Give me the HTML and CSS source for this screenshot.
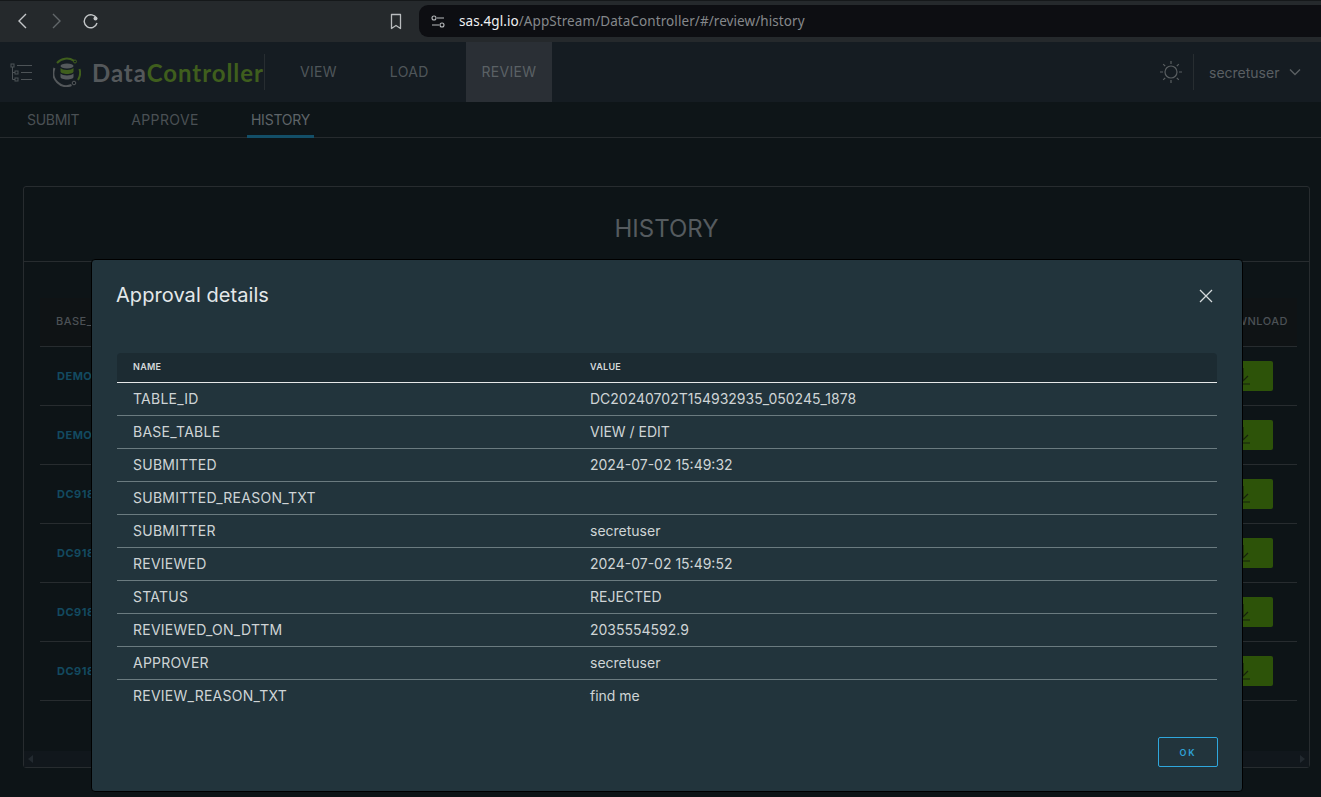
FILE: index.html
```html
<!DOCTYPE html>
<html lang="en">
<head>
<meta charset="utf-8">
<title>Data Controller - History</title>
<link rel="stylesheet" href="styles.css">
</head>
<body>
<div class="browser">
  <div class="browser-nav">
    <svg class="b-icon" width="12" height="18" viewBox="0 0 12 18"><path d="M9 2 2 9l7 7" fill="none" stroke="#c4c7c9" stroke-width="1.4"/></svg>
    <svg class="b-icon" width="12" height="18" viewBox="0 0 12 18"><path d="M3 2l7 7-7 7" fill="none" stroke="#62676a" stroke-width="1.4"/></svg>
    <svg class="b-icon" width="16" height="16" viewBox="0 0 16 16"><path d="M13.6 5.5A6.5 6.5 0 1 0 14 10" fill="none" stroke="#c4c7c9" stroke-width="1.4"/><circle cx="12.5" cy="5.5" r="2" fill="#c4c7c9"/></svg>
  </div>
  <svg class="bookmark" width="12" height="17" viewBox="0 0 12 17"><path d="M1.5 1.5h9v14L6 12.5l-4.500 3z" fill="none" stroke="#b9bcbe" stroke-width="1.3" stroke-linejoin="round"/></svg>
  <div class="address">
    <svg width="14" height="13" viewBox="0 0 14 13"><g fill="none" stroke="#b9bcbe" stroke-width="1.1"><circle cx="3" cy="3" r="2"/><path d="M6 3h7M1 10h7"/><circle cx="11" cy="10" r="2"/></g></svg>
    <span class="url"><b class="host">sas.4gl.io</b>/AppStream/DataController/#/review/history</span>
  </div>
</div>

<header class="app-header">
  <svg class="tree" width="22" height="19" viewBox="0 0 22 19"><g fill="none" stroke="#4d5357" stroke-width="1"><rect x="1" y="1" width="3" height="3"/><rect x="5" y="8" width="3" height="3"/><rect x="5" y="15" width="3" height="3"/><path d="M2.500 4v12.500H5M2.500 9.500H5M7 2.500h15M11 9.500h11M11 16.500h11" /></g></svg>
  <svg class="logo" width="28" height="30" viewBox="0 0 28 30">
    <path d="M21 3.800A13 13 0 0 0 4 6" fill="none" stroke="#3f5e1d" stroke-width="2"/>
    <circle cx="22" cy="4.500" r="1.500" fill="none" stroke="#3f5e1d"/>
    <path d="M26.500 12a13 13 0 0 1-1.500 11" fill="none" stroke="#3f5e1d" stroke-width="2"/>
    <path d="M1.500 11a13 13 0 0 0 17 17" fill="none" stroke="#54585b" stroke-width="2"/>
    <circle cx="21" cy="26" r="1.800" fill="none" stroke="#54585b"/>
    <ellipse cx="14" cy="9" rx="6.500" ry="2.500" fill="#54585b"/>
    <path d="M7.500 11v3.500c0 1.500 3 2.500 6.500 2.500s6.500-1 6.500-2.500V11c-1 1.300-3.500 2-6.500 2s-5.500-.7-6.500-2z" fill="#3f5e1d"/>
    <path d="M7.500 16.500V20c0 1.500 3 2.500 6.500 2.500s6.500-1 6.500-2.500v-3.500c-1 1.300-3.500 2-6.500 2s-5.500-.7-6.500-2z" fill="#54585b"/>
  </svg>
  <span class="brand"><span class="brand-a">Data</span><span class="brand-b">Controller</span></span>
  <span class="divider brand-divider"></span>
  <nav class="main-nav">
    <a class="nav-item">VIEW</a>
    <a class="nav-item">LOAD</a>
    <a class="nav-item nav-active">REVIEW</a>
  </nav>
  <svg class="sun" width="24" height="24" viewBox="0 0 24 24"><g fill="none" stroke="#5a5f62" stroke-width="1.200"><circle cx="12" cy="12" r="6"/><path d="M12 1v3M12 20v3M1 12h3M20 12h3M4.200 4.200l2 2M17.800 17.800l2 2M4.200 19.800l2-2M17.800 6.200l2-2"/></g></svg>
  <span class="divider user-divider"></span>
  <span class="user">secretuser</span>
  <svg class="chev" width="12" height="8" viewBox="0 0 12 8"><path d="M1 1.500l5 5 5-5" fill="none" stroke="#5a5f62" stroke-width="1.400"/></svg>
</header>

<nav class="sub-nav">
  <a class="sub-item sub-submit">SUBMIT</a>
  <a class="sub-item sub-approve">APPROVE</a>
  <a class="sub-item sub-active">HISTORY</a>
</nav>

<main class="content">
  <section class="card">
    <h1 class="card-title">HISTORY</h1>
    <div class="card-body">
      <div class="hist-head"><span>BASE_TABLE</span><span>DOWNLOAD</span></div>
      <div class="hist-row"><a>DEMO</a><span class="dl"><svg width="16" height="18" viewBox="0 0 16 18"><path d="M8 1v13M3 9l5 5 5-5M1 17h14" fill="none" stroke="#17230c" stroke-width="1.200"/></svg></span></div>
      <div class="hist-row"><a>DEMO</a><span class="dl"><svg width="16" height="18" viewBox="0 0 16 18"><path d="M8 1v13M3 9l5 5 5-5M1 17h14" fill="none" stroke="#17230c" stroke-width="1.200"/></svg></span></div>
      <div class="hist-row"><a>DC918</a><span class="dl"><svg width="16" height="18" viewBox="0 0 16 18"><path d="M8 1v13M3 9l5 5 5-5M1 17h14" fill="none" stroke="#17230c" stroke-width="1.200"/></svg></span></div>
      <div class="hist-row"><a>DC918</a><span class="dl"><svg width="16" height="18" viewBox="0 0 16 18"><path d="M8 1v13M3 9l5 5 5-5M1 17h14" fill="none" stroke="#17230c" stroke-width="1.200"/></svg></span></div>
      <div class="hist-row"><a>DC918</a><span class="dl"><svg width="16" height="18" viewBox="0 0 16 18"><path d="M8 1v13M3 9l5 5 5-5M1 17h14" fill="none" stroke="#17230c" stroke-width="1.200"/></svg></span></div>
      <div class="hist-row"><a>DC918</a><span class="dl"><svg width="16" height="18" viewBox="0 0 16 18"><path d="M8 1v13M3 9l5 5 5-5M1 17h14" fill="none" stroke="#17230c" stroke-width="1.200"/></svg></span></div>
    </div>
    <div class="scrollbar"><i class="arrow-l"></i><i class="arrow-r"></i></div>
  </section>
</main>

<div class="modal" role="dialog">
  <div class="modal-head">
    <h2 class="modal-title">Approval details</h2>
    <svg class="close" width="14" height="14" viewBox="0 0 14 14"><path d="M1 1l12 12M13 1L1 13" fill="none" stroke="#d5dadc" stroke-width="1.300"/></svg>
  </div>
  <table class="details">
    <thead><tr><th>NAME</th><th>VALUE</th></tr></thead>
    <tbody>
      <tr><td>TABLE_ID</td><td>DC20240702T154932935_050245_1878</td></tr>
      <tr><td>BASE_TABLE</td><td>VIEW / EDIT</td></tr>
      <tr><td>SUBMITTED</td><td>2024-07-02 15:49:32</td></tr>
      <tr><td>SUBMITTED_REASON_TXT</td><td></td></tr>
      <tr><td>SUBMITTER</td><td>secretuser</td></tr>
      <tr><td>REVIEWED</td><td>2024-07-02 15:49:52</td></tr>
      <tr><td>STATUS</td><td>REJECTED</td></tr>
      <tr><td>REVIEWED_ON_DTTM</td><td>2035554592.9</td></tr>
      <tr><td>APPROVER</td><td>secretuser</td></tr>
      <tr><td>REVIEW_REASON_TXT</td><td>find me</td></tr>
    </tbody>
  </table>
  <div class="modal-foot"><button class="ok">OK</button></div>
</div>
</body>
</html>
```

FILE: styles.css
```css
* { box-sizing: border-box; }
html, body { margin: 0; height: 100%; }
body {
  position: relative;
  height: 797px;
  overflow: hidden;
  background: #0d1417;
  font-family: Inter, "Liberation Sans", sans-serif;
  color: #c8cdd0;
}

/* Browser chrome */
.browser {
  height: 42px;
  display: flex;
  align-items: center;
  background: #25292c;
  border-top: 1px solid #15181a;
  padding: 0 0 1px 17px;
}
.browser-nav { display: flex; align-items: center; gap: 21px; width: 365px; }
.b-icon { flex: none; }
.bookmark { flex: none; margin-right: 17px; margin-left: 8px; }
.address {
  flex: 1;
  height: 32px;
  display: flex;
  align-items: center;
  gap: 14px;
  padding-left: 12px;
  background: #0d0e12;
  border-radius: 9px 0 0 9px;
}
.url {
  font: 13.5px "Noto Sans", sans-serif;
  color: #85888b;
  letter-spacing: 0.08px;
}
.host { font-weight: 400; color: #f0f1f2; }

/* App header */
.app-header {
  height: 60px;
  display: flex;
  align-items: center;
  background: #151c22;
}
.tree { flex: none; margin-left: 10px; }
.logo { flex: none; margin-left: 21px; margin-right: 11px; }
.brand { font: 700 24px Lato, sans-serif; letter-spacing: 0.95px; width: 172px; white-space: nowrap; }
.brand-a { color: #54585b; }
.brand-b { color: #3f5e1d; }
.divider { flex: none; width: 1px; height: 36px; background: #272d31; }
.brand-divider { margin-left: 0; margin-right: 19px; }
.main-nav { display: flex; align-self: stretch; gap: 21px; flex: 1; }
.nav-item {
  display: flex;
  align-items: center;
  padding: 0 16px 1px;
  font-size: 14px;
  letter-spacing: 0.3px;
  color: #4f565a;
}
.nav-active { background: #2a2f35; color: #5b6165; }
.sun { flex: none; margin-right: 10px; }
.user { font-size: 14px; color: #5a5f62; margin: 0 10px 0 15px; width: 70px; }
.chev { flex: none; margin-right: 20px; margin-left: 0; }

/* Sub navigation */
.sub-nav {
  height: 36px;
  display: flex;
  gap: 44px;
  padding-left: 23px;
  background: #0e1518;
  border-bottom: 1px solid #262b2e;
}
.sub-item {
  display: flex;
  align-items: center;
  height: 36px;
  padding: 0 4px 1px;
  font-size: 14px;
  color: #4a5054;
}
.sub-submit { letter-spacing: -0.3px; }
.sub-approve { letter-spacing: 0.4px; }
.sub-active { color: #5e6468; border-bottom: 3px solid #134f68; padding-top: 2px; letter-spacing: -0.2px; }

/* Page content */
.content { padding: 48px 11px 0 23px; }
.card {
  height: 582px;
  display: flex;
  flex-direction: column;
  border: 1px solid #272c2f;
  border-radius: 3px;
  background: #0d1417;
}
.card-title {
  height: 75px;
  margin: 0;
  padding-top: 8px;
  display: flex;
  align-items: center;
  justify-content: center;
  border-bottom: 1px solid #272c2f;
  font-size: 24px;
  font-weight: 400;
  color: #555b5f;
}
.card-body { flex: 1; padding: 36px 12px 0 16px; }
.hist-head {
  height: 49px;
  display: flex;
  align-items: center;
  justify-content: space-between;
  padding: 0 9px 2px 16px;
  background: #0f1315;
  border-bottom: 1px solid #272c2f;
  font-size: 11px;
  font-weight: 500;
  letter-spacing: 0.5px;
  color: #4c5155;
}
.hist-row {
  height: 59px;
  display: flex;
  align-items: center;
  justify-content: space-between;
  padding: 0 24px 0 17px;
  border-bottom: 1px solid #272c2f;
  font-size: 11px;
  font-weight: 700;
  letter-spacing: 0.5px;
  color: #134a60;
}
.dl {
  width: 60px;
  height: 30px;
  display: flex;
  align-items: center;
  justify-content: center;
  background: #2d5309;
  border-radius: 2px;
}
.scrollbar {
  height: 16px;
  display: flex;
  align-items: center;
  justify-content: space-between;
  padding: 0 4px;
  background: #11171c;
}
.arrow-l { border: 4px solid transparent; border-right: 5px solid #232a30; border-left: 0; }
.arrow-r { border: 4px solid transparent; border-left: 5px solid #232a30; border-right: 0; }

/* Modal */
.modal {
  position: absolute;
  left: 91px;
  top: 259px;
  width: 1152px;
  height: 533px;
  padding: 0 24px 0 25px;
  display: flex;
  flex-direction: column;
  background: #22343c;
  border: 1px solid #000;
  border-radius: 4px;
}
.modal-head {
  height: 93px;
  flex: none;
  display: flex;
  align-items: flex-start;
  justify-content: space-between;
  padding: 23px 5px 0 0;
}
.modal-title { margin: 0 0 0 -1px; font-size: 20px; line-height: 24px; font-weight: 400; letter-spacing: 0.06px; color: #e4e8ea; }
.close { margin-top: 6px; }
.details {
  width: 1100px;
  border-collapse: separate;
  border-spacing: 0;
  table-layout: fixed;
  font-size: 14px;
}
.details th {
  height: 30px;
  padding: 0 16px 2px;
  text-align: left;
  font-size: 9px;
  font-weight: 600;
  letter-spacing: 0.3px;
  color: #d5dadc;
  background: #1c2b32;
  border-bottom: 1px solid #e6e8e8;
}
.details th:first-child { border-top-left-radius: 4px; }
.details th:last-child { border-top-right-radius: 4px; }
.details th:first-child, .details td:first-child { width: 457px; }
.details td {
  height: 33px;
  padding: 0 16px 2px;
  color: #cfd4d6;
  border-bottom: 1px solid #6b7b80;
}
.details td:first-child { letter-spacing: 0.25px; }
.details tr:last-child td { border-bottom: 0; }
.modal-foot { flex: 1; display: flex; justify-content: flex-end; align-items: flex-end; padding-bottom: 24px; }
.ok {
  width: 60px;
  height: 30px;
  background: transparent;
  border: 1px solid #2fa7dd;
  border-radius: 2px;
  font: 600 9px Inter, sans-serif;
  letter-spacing: 2px;
  color: #2fa0d5;
}
```
